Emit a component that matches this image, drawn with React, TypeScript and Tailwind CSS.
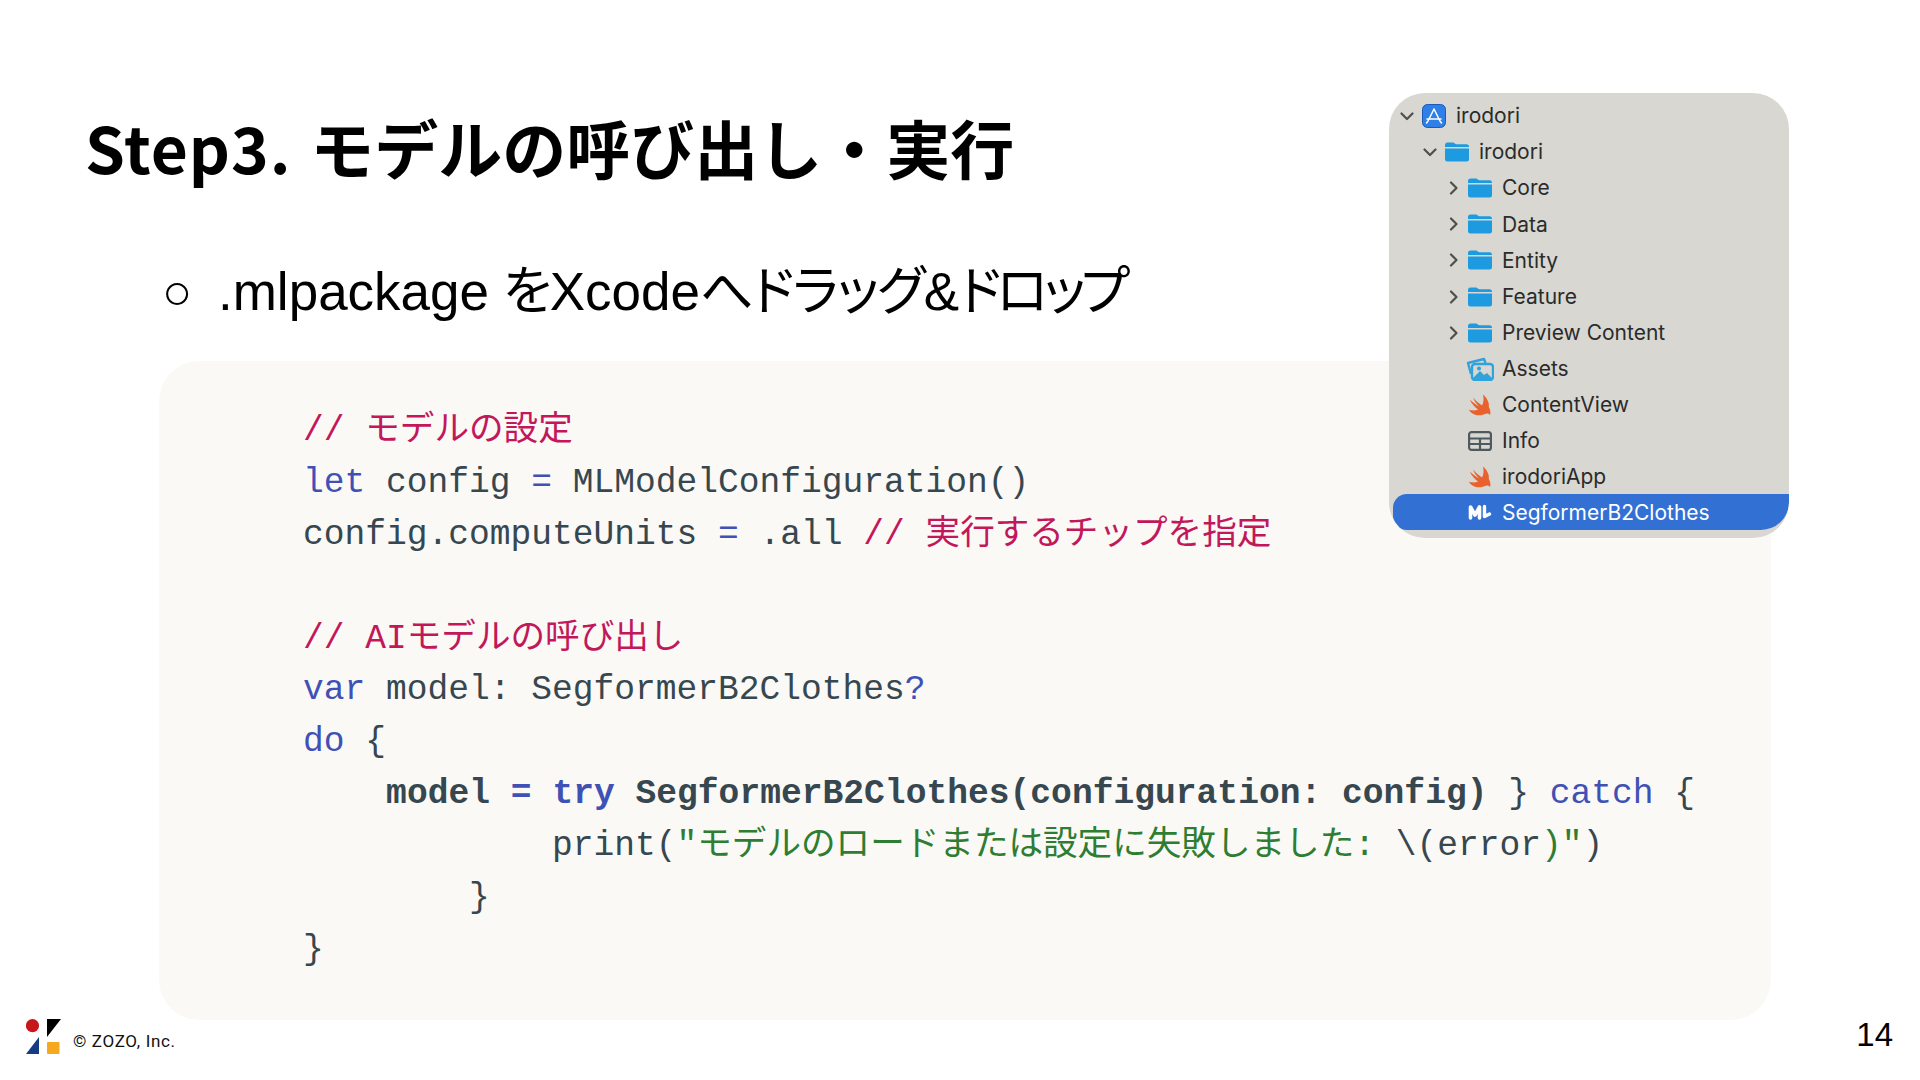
const mono = "font-['Liberation_Mono','Noto_Sans_CJK_JP',monospace]";

function Comment({ children }: { children: string }) {
  return <span className="text-[#c2185b]">{children}</span>;
}
function Kw({ children }: { children: string }) {
  return <span className="text-[#3f51b5]">{children}</span>;
}
function Str({ children }: { children: string }) {
  return <span className="text-[#2e7d32]">{children}</span>;
}

function Chevron({ open }: { open: boolean }) {
  return (
    <svg viewBox="0 0 14 14" className="w-[14px] h-[14px] ml-[4px] text-[#50504a]" fill="none" stroke="currentColor" strokeWidth="2.200" strokeLinecap="round" strokeLinejoin="round">
      {open ? <path d="M1.500 4.500L7 10l5.500-5.500" /> : <path d="M5 1.500L10.500 7 5 12.500" />}
    </svg>
  );
}

function FolderIcon() {
  return (
    <svg viewBox="0 0 24 22" className="w-[24px] h-[22px]">
      <path d="M0 4a2.500 2.500 0 0 1 2.500-2.500h5.500c1.500 0 2 1.800 3.500 1.800H21.500A2.500 2.500 0 0 1 24 5.800V6H0z" fill="#1e9be0" />
      <path d="M0 7.500h24V18a2.500 2.500 0 0 1-2.500 2.500h-19A2.500 2.500 0 0 1 0 18z" fill="#1e9be0" />
    </svg>
  );
}

function ProjectIcon() {
  return (
    <svg viewBox="0 0 24 24" className="w-[24px] h-[24px]">
      <rect x="0.500" y="0.500" width="23" height="23" rx="5" fill="#2f7fe8" stroke="#1a5ab8" />
      <path d="M12 5l-6 12M12 5l6 12M5 15h14M6 17l-1.500 2M18 17l1.500 2" stroke="#fff" strokeWidth="1.500" strokeLinecap="round" fill="none" />
    </svg>
  );
}

function AssetsIcon() {
  return (
    <svg viewBox="0 0 28 24" className="w-[28px] h-[24px] -ml-[2px] -mr-[2px]">
      <path d="M5 17L2 6 18 2l1.500 4" fill="none" stroke="#2ea3dc" strokeWidth="2.400" strokeLinejoin="round" />
      <rect x="6" y="7" width="21" height="16" rx="3" fill="#d8d7d1" stroke="#2ea3dc" strokeWidth="2.400" />
      <path d="M6 23v-1l8-8 4 4 3-2 6 6v1z" fill="#2ea3dc" />
      <circle cx="13" cy="11.500" r="2" fill="#2ea3dc" />
    </svg>
  );
}

function SwiftIcon() {
  return (
    <svg viewBox="0 0 24 22" className="w-[24px] h-[22px]">
      <path d="M15 0.500C19 4 21.500 8.500 20.800 13C22.300 15.500 23 18.500 22 21C21 19.500 19 19 17 20C13 22 8 21.800 4.500 19.500C3 18.500 1.500 17 0.500 15.500C3 16.500 7 17 10 15.500C6.500 13 3.500 9.500 1.800 5.500C5 8.500 8.500 11 11 12.500C8.500 10 6.300 7 5 3.500C7.500 6.500 11 9.500 14 11.500C15.700 8.500 16 4.500 15 0.500Z" fill="#e9622e" />
    </svg>
  );
}

function TableIcon() {
  return (
    <svg viewBox="0 0 24 20" className="w-[24px] h-[20px]" fill="none" stroke="#4f5a5e" strokeWidth="2.200">
      <rect x="1.100" y="1.100" width="21.800" height="17.800" rx="2.500" />
      <path d="M1 7.500h22M1 13h22M12 7.500V19" />
    </svg>
  );
}

function ModelIcon() {
  return (
    <svg viewBox="0 0 24 20" className="w-[24px] h-[20px]" fill="none" stroke="#fff" strokeLinecap="round" strokeLinejoin="round">
      <path d="M2.500 15V4l4.500 8 4.500-8v11" strokeWidth="3.600" />
      <path d="M16.500 3.500v10l5-2.500" strokeWidth="3.400" />
    </svg>
  );
}

const rows = [
  { name: "irodori", icon: <ProjectIcon />, chevron: "open", pad: "pl-[7px]" },
  { name: "irodori", icon: <FolderIcon />, chevron: "open", pad: "pl-[30px]" },
  { name: "Core", icon: <FolderIcon />, chevron: "closed", pad: "pl-[53px]" },
  { name: "Data", icon: <FolderIcon />, chevron: "closed", pad: "pl-[53px]" },
  { name: "Entity", icon: <FolderIcon />, chevron: "closed", pad: "pl-[53px]" },
  { name: "Feature", icon: <FolderIcon />, chevron: "closed", pad: "pl-[53px]" },
  { name: "Preview Content", icon: <FolderIcon />, chevron: "closed", pad: "pl-[53px]" },
  { name: "Assets", icon: <AssetsIcon />, chevron: "", pad: "pl-[53px]" },
  { name: "ContentView", icon: <SwiftIcon />, chevron: "", pad: "pl-[53px]" },
  { name: "Info", icon: <TableIcon />, chevron: "", pad: "pl-[53px]" },
  { name: "irodoriApp", icon: <SwiftIcon />, chevron: "", pad: "pl-[53px]" },
];

function ProjectNavigator() {
  return (
    <div className="absolute left-[1389px] top-[93px] w-[400px] h-[445px] bg-[#d8d7d1] rounded-[36px] overflow-hidden pt-[5px] font-['Inter','Noto_Sans',sans-serif] text-[21px] text-[#2b2b2b]">
      {rows.map((row, i) => (
        <div key={i} className={`flex items-center h-[36.100px] ${row.pad}`}>
          <div className="w-[26px] flex items-center">
            {row.chevron && <Chevron open={row.chevron === "open"} />}
          </div>
          <div className="w-[24px] h-[24px] flex items-center justify-center">{row.icon}</div>
          <span className="ml-[10px]">{row.name}</span>
        </div>
      ))}
      <div className="-mt-[1px] flex items-center h-[36px] pt-[1px] ml-[4px] pl-[49px] bg-[#3370d4] rounded-l-[14px] rounded-br-[28px] text-white">
        <div className="w-[26px]" />
        <div className="w-[24px] h-[24px] flex items-center justify-center">
          <ModelIcon />
        </div>
        <span className="ml-[10px]">SegformerB2Clothes</span>
      </div>
    </div>
  );
}

function Logo() {
  return (
    <svg viewBox="0 0 35 35" className="w-[35px] h-[35px] shrink-0">
      <circle cx="6.500" cy="6.700" r="6.600" fill="#c8161d" />
      <polygon points="21,0 35,0 21,18" fill="#000" />
      <polygon points="0,35 13,35 13,18" fill="#163d84" />
      <rect x="21" y="23" width="12.500" height="12" rx="1" fill="#f5a91f" />
    </svg>
  );
}

export default function App() {
  return (
    <div className="relative w-[1920px] h-[1080px] overflow-hidden bg-white flex flex-col">
      <h1 className="mt-[106px] pl-[85px] h-[84px] leading-[80px] text-[64px] font-bold text-black font-['Noto_Sans_CJK_JP',sans-serif] whitespace-pre">
        <span className="tracking-[1px]">Step3.</span><span className="mr-[4px]"> </span>モデルの呼び出し・実行
      </h1>

      <div className="mt-[72px] pl-[162px] h-[60px] leading-[60px] flex text-[53px] text-black font-['Liberation_Sans','Noto_Sans_CJK_JP',sans-serif] [font-feature-settings:'palt']">
        <span className="w-[56px] text-[50px]">○</span>
        <span className="whitespace-pre">
          .mlpackage <span className="-ml-[1px] tracking-[-2px]">を</span>Xcode
          <span className="tracking-[-1.500px]">へドラッグ</span>&amp;
          <span className="tracking-[-4.500px]">ドロップ</span>
        </span>
      </div>

      <div className={`mt-[39px] ml-[159px] w-[1612px] h-[659px] shrink-0 bg-[#faf9f6] rounded-[40px] pt-[44px] pl-[144px] text-[34.600px] leading-[51.900px] text-[#37474f] whitespace-pre ${mono}`}>
        <div className="h-[51.900px]"><Comment>// モデルの設定</Comment></div>
        <div className="h-[51.900px]"><Kw>let</Kw> config <Kw>=</Kw> MLModelConfiguration()</div>
        <div className="h-[51.900px]">config.computeUnits <Kw>=</Kw> .all <Comment>// 実行するチップを指定</Comment></div>
        <div className="h-[51.900px]" />
        <div className="h-[51.900px]"><Comment>// AIモデルの呼び出し</Comment></div>
        <div className="h-[51.900px]"><Kw>var</Kw> model: SegformerB2Clothes<Kw>?</Kw></div>
        <div className="h-[51.900px]"><Kw>do</Kw> {"{"}</div>
        <div className="h-[51.900px]">
          <span className="font-bold tracking-[0.03px]">{"    model "}<Kw>=</Kw> <Kw>try</Kw> SegformerB2Clothes(configuration: config)</span> {"} "}<Kw>catch</Kw> {"{"}
        </div>
        <div className="h-[51.900px]">{"            print("}<Str>"モデルのロードまたは設定に失敗しました: </Str>{"\\(error"}<Str>)"</Str>)</div>
        <div className="h-[51.900px]">{"        }"}</div>
        <div className="h-[51.900px]">{"}"}</div>
      </div>

      <div className="-mt-[1px] pl-[26px] pr-[27px] flex items-start justify-between">
        <div className="flex items-start">
          <Logo />
          <span className="ml-[12px] mt-[11px] leading-[22px] text-[17px] tracking-[0.65px] text-[#111] font-['Roboto','Noto_Sans',sans-serif]">© ZOZO, Inc.</span>
        </div>
        <span className="leading-[32px] text-[33px] text-black font-['Liberation_Sans',sans-serif]">14</span>
      </div>

      <ProjectNavigator />
    </div>
  );
}
